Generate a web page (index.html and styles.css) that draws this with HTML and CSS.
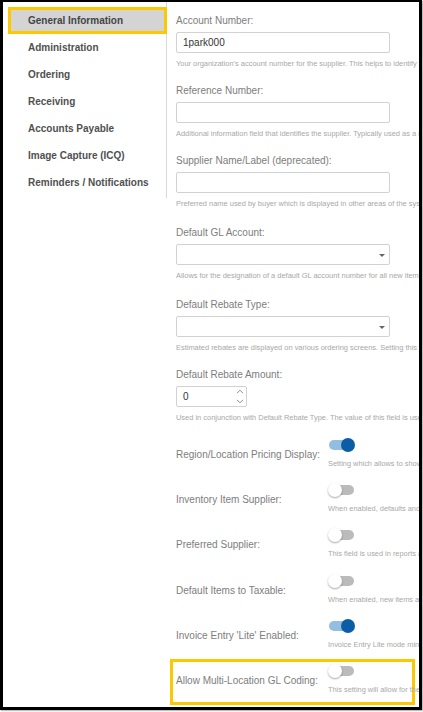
FILE: index.html
```html
<!DOCTYPE html>
<html lang="en">
<head>
<meta charset="utf-8">
<title>Supplier Settings</title>
<link rel="stylesheet" href="styles.css">
</head>
<body>
<div class="frame">
  <nav class="sidebar">
    <div class="nav-item active">General Information</div>
    <div class="nav-item">Administration</div>
    <div class="nav-item">Ordering</div>
    <div class="nav-item">Receiving</div>
    <div class="nav-item">Accounts Payable</div>
    <div class="nav-item">Image Capture (ICQ)</div>
    <div class="nav-item">Reminders / Notifications</div>
  </nav>
  <main class="content">
    <div class="field">
      <div class="label">Account Number:</div>
      <div class="input">1park000</div>
      <div class="help">Your organization's account number for the supplier. This helps to identify your account with the supplier.</div>
    </div>
    <div class="field">
      <div class="label">Reference Number:</div>
      <div class="input"></div>
      <div class="help">Additional information field that identifies the supplier. Typically used as a reference number.</div>
    </div>
    <div class="field">
      <div class="label">Supplier Name/Label (deprecated):</div>
      <div class="input"></div>
      <div class="help">Preferred name used by buyer which is displayed in other areas of the system.</div>
    </div>
    <div class="field field-sel">
      <div class="label">Default GL Account:</div>
      <div class="input select"><span></span><span class="caret"></span></div>
      <div class="help">Allows for the designation of a default GL account number for all new items.</div>
    </div>
    <div class="field field-sel">
      <div class="label">Default Rebate Type:</div>
      <div class="input select"><span></span><span class="caret"></span></div>
      <div class="help">Estimated rebates are displayed on various ordering screens. Setting this value.</div>
    </div>
    <div class="field">
      <div class="label">Default Rebate Amount:</div>
      <div class="input number"><span>0</span>
        <span class="spin">
          <svg width="8" height="5" viewBox="0 0 8 5"><path d="M1 4.2 L4 1.2 L7 4.2" fill="none" stroke="#8a8a8a" stroke-width="1"/></svg>
          <svg width="8" height="5" viewBox="0 0 8 5"><path d="M1 0.8 L4 3.8 L7 0.8" fill="none" stroke="#8a8a8a" stroke-width="1"/></svg>
        </span>
      </div>
      <div class="help">Used in conjunction with Default Rebate Type. The value of this field is used.</div>
    </div>

    <div class="toggle-row first">
      <div class="t-label">Region/Location Pricing Display:</div>
      <div class="t-right">
        <span class="switch on"><span class="track"></span><span class="knob"></span></span>
        <div class="t-help">Setting which allows to show pricing.</div>
      </div>
    </div>
    <div class="toggle-row">
      <div class="t-label">Inventory Item Supplier:</div>
      <div class="t-right">
        <span class="switch"><span class="track"></span><span class="knob"></span></span>
        <div class="t-help">When enabled, defaults and settings.</div>
      </div>
    </div>
    <div class="toggle-row">
      <div class="t-label">Preferred Supplier:</div>
      <div class="t-right">
        <span class="switch"><span class="track"></span><span class="knob"></span></span>
        <div class="t-help">This field is used in reports and</div>
      </div>
    </div>
    <div class="toggle-row">
      <div class="t-label">Default Items to Taxable:</div>
      <div class="t-right">
        <span class="switch"><span class="track"></span><span class="knob"></span></span>
        <div class="t-help">When enabled, new items are</div>
      </div>
    </div>
    <div class="toggle-row">
      <div class="t-label">Invoice Entry 'Lite' Enabled:</div>
      <div class="t-right">
        <span class="switch on"><span class="track"></span><span class="knob"></span></span>
        <div class="t-help">Invoice Entry Lite mode minimizes</div>
      </div>
    </div>
    <div class="toggle-row highlight">
      <div class="t-label">Allow Multi-Location GL Coding:</div>
      <div class="t-right">
        <span class="switch"><span class="track"></span><span class="knob"></span></span>
        <div class="t-help">This setting will allow for the</div>
      </div>
    </div>
  </main>
</div>
</body>
</html>
```
FILE: styles.css
```css
html, body {
  margin: 0;
  padding: 0;
  background: #fff;
}
body {
  font-family: "Liberation Sans", Arial, sans-serif;
  width: 423px;
  height: 712px;
}
.frame {
  width: 422px;
  height: 710px;
  box-sizing: border-box;
  border-style: solid;
  border-color: #000;
  border-width: 2px 3px 3px 3px;
  overflow: hidden;
  display: flex;
  box-shadow: 1px 1px 1px rgba(0,0,0,0.25);
}
.sidebar {
  flex: none;
  width: 164px;
  box-sizing: border-box;
  align-self: flex-start;
  padding-top: 5px;
  padding-bottom: 2px;
  border-right: 1px solid #d9d9d9;
}
.nav-item {
  height: 27px;
  line-height: 27px;
  padding-left: 25px;
  font-size: 10px;
  font-weight: bold;
  color: #505050;
  white-space: nowrap;
}
.nav-item.active {
  box-sizing: border-box;
  margin-left: 5px;
  margin-right: -1px;
  padding-left: 17px;
  line-height: 21px;
  border: 3px solid #fcc800;
  background: #d4d4d4;
  color: #444;
}
.content {
  flex: 1;
  min-width: 0;
  padding-left: 9px;
  padding-top: 12px;
}
.field {
  margin-bottom: 15px;
}
.field-sel {
  padding-top: 2px;
}
.label {
  font-size: 10px;
  line-height: 14px;
  color: #7d7d7d;
  margin-bottom: 4px;
  white-space: nowrap;
}
.input {
  width: 214px;
  height: 21px;
  box-sizing: border-box;
  border: 1px solid #d2d2d2;
  border-radius: 2px;
  padding-left: 6px;
  display: flex;
  align-items: center;
  font-size: 10px;
  color: #333;
}
.select {
  justify-content: space-between;
  padding-right: 4px;
}
.caret {
  width: 0;
  height: 0;
  border-left: 3px solid transparent;
  border-right: 3px solid transparent;
  border-top: 3px solid #666;
  margin-top: 1px;
}
.number {
  width: 71px;
  justify-content: space-between;
  padding-right: 2px;
}
.spin {
  display: flex;
  flex-direction: column;
  gap: 5px;
}
.spin svg {
  display: block;
}
.help {
  margin-top: 6px;
  font-size: 7.45px;
  line-height: 10px;
  color: #a8a8a8;
  white-space: nowrap;
}
.toggle-row {
  display: flex;
  align-items: center;
  margin-bottom: 14.2px;
}
.toggle-row.first {
  margin-top: 11px;
}
.t-label {
  flex: none;
  width: 152px;
  padding-top: 3px;
  font-size: 10px;
  line-height: 14px;
  color: #7d7d7d;
  white-space: nowrap;
}
.t-right {
  display: flex;
  flex-direction: column;
  align-items: flex-start;
}
.t-help {
  margin-top: 7px;
  font-size: 7.4px;
  line-height: 10px;
  color: #a8a8a8;
  white-space: nowrap;
}
.switch {
  position: relative;
  display: block;
  width: 27px;
  height: 14px;
}
.track {
  position: absolute;
  left: 1px;
  right: 1px;
  top: 2px;
  height: 10px;
  border-radius: 5px;
  background: #bbbbbb;
}
.knob {
  position: absolute;
  top: 0;
  left: 0;
  width: 14px;
  height: 14px;
  border-radius: 50%;
  background: #fff;
  box-shadow: 0 1px 2px rgba(0,0,0,0.35);
}
.switch.on .track {
  background: #93bee0;
}
.switch.on .knob {
  left: 13px;
  background: #0b5ea6;
  box-shadow: none;
}
.highlight {
  margin-top: -5px;
  margin-left: -6px;
  width: 245px;
  box-sizing: border-box;
  padding: 2px 0 7px 3px;
  border: 3px solid #fcc800;
  margin-bottom: 0;
}
```
